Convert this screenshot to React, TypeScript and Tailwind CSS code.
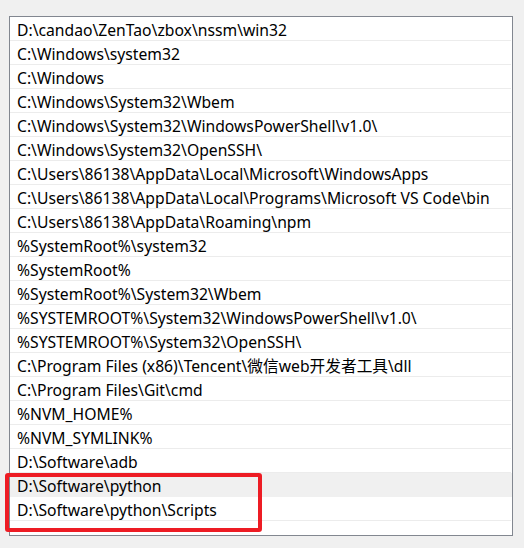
import React from "react";

const rows = [
  "D:\\candao\\ZenTao\\zbox\\nssm\\win32",
  "C:\\Windows\\system32",
  "C:\\Windows",
  "C:\\Windows\\System32\\Wbem",
  "C:\\Windows\\System32\\WindowsPowerShell\\v1.0\\",
  "C:\\Windows\\System32\\OpenSSH\\",
  "C:\\Users\\86138\\AppData\\Local\\Microsoft\\WindowsApps",
  "C:\\Users\\86138\\AppData\\Local\\Programs\\Microsoft VS Code\\bin",
  "C:\\Users\\86138\\AppData\\Roaming\\npm",
  "%SystemRoot%\\system32",
  "%SystemRoot%",
  "%SystemRoot%\\System32\\Wbem",
  "%SYSTEMROOT%\\System32\\WindowsPowerShell\\v1.0\\",
  "%SYSTEMROOT%\\System32\\OpenSSH\\",
  "C:\\Program Files (x86)\\Tencent\\微信web开发者工具\\dll",
  "C:\\Program Files\\Git\\cmd",
  "%NVM_HOME%",
  "%NVM_SYMLINK%",
  "D:\\Software\\adb",
  "D:\\Software\\python",
  "D:\\Software\\python\\Scripts",
];

export default function App() {
  return (
    <div
      className="w-[524px] h-[548px] bg-[#f0f0f0] pt-4 pl-[9px] relative"
      style={{ fontFamily: '"Noto Sans", "Noto Sans CJK SC", sans-serif' }}
    >
      <div className="w-[504px] h-[520px] border border-[#828790] bg-white">
        {rows.map((r, i) => (
          <div
            key={i}
            className={
              i === 19
                ? "h-6 bg-[#f0f0f0] pl-[7px] pt-[3px] text-[15.7px] leading-[21px] text-black whitespace-nowrap"
                : "h-6 border-b border-[#ececec] mr-px pl-[7px] pt-[3px] text-[15.7px] leading-[20px] text-black whitespace-nowrap"
            }
          >
            {r}
          </div>
        ))}
      </div>
      <div className="absolute left-[5px] top-[473px] w-[257px] h-[59px] border-4 border-[#ed1c24] rounded-[3px]" />
    </div>
  );
}
